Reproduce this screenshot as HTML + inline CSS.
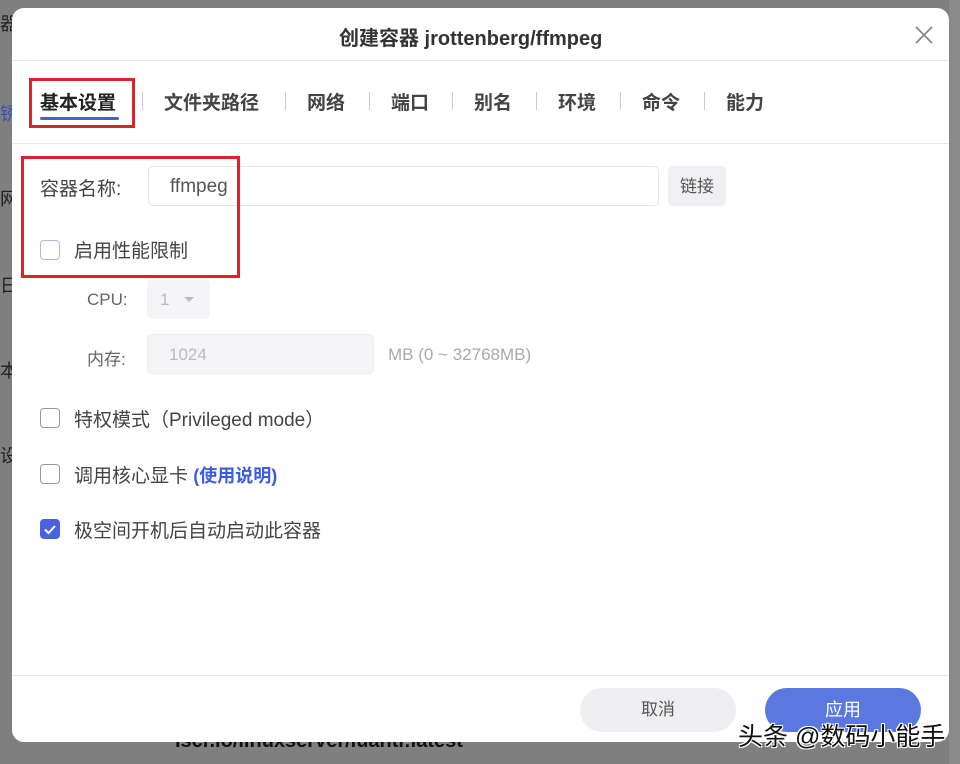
<!DOCTYPE html>
<html><head><meta charset="utf-8"><style>
*{margin:0;padding:0;box-sizing:border-box}
body{width:960px;height:764px;background:#7f7f7f;position:relative;overflow:hidden;font-family:"Liberation Sans","Noto Sans CJK SC",sans-serif;color:#333}
.a{position:absolute}
.dlg{left:12px;top:8px;width:937px;height:734px;background:#fff;border-radius:12px}
.t{font-size:20px;font-weight:bold;color:#333;white-space:nowrap}
.tab{top:88px;font-size:19px;font-weight:bold;color:#444;white-space:nowrap}
.sep{top:92px;width:1px;height:18px;background:#ccc}
.cb{width:20px;height:20px;border:1.5px solid #999;border-radius:4px;background:#fff}
.lbl{font-size:19px;color:#444;white-space:nowrap}
.red{border:3px solid #d9232d}
</style></head><body>
<div class="a" style="left:0;top:10px;font-size:18px;color:#222;">器</div>
<div class="a" style="left:0;top:100px;font-size:18px;color:#3350c0;">锈</div>
<div class="a" style="left:0;top:185px;font-size:18px;color:#222;">网</div>
<div class="a" style="left:0;top:272px;font-size:18px;color:#222;">日</div>
<div class="a" style="left:0;top:357px;font-size:18px;color:#222;">本</div>
<div class="a" style="left:0;top:442px;font-size:18px;color:#222;">设</div>
<div class="a" style="left:949px;top:0;width:11px;height:764px;background:#8a8a8a"></div>
<div class="a" style="left:175px;top:730px;font-size:20px;color:#111;font-weight:bold">lscr.io/linuxserver/luanti:latest</div>
<div class="a dlg"></div>
<div class="a t" style="left:339px;top:22px">创建容器 jrottenberg/ffmpeg</div>
<div class="a" style="left:913px;top:24px"><svg width="22" height="22"><path d="M3 3L19 19M19 3L3 19" stroke="#888" stroke-width="1.8"/></svg></div>
<div class="a" style="left:12px;top:60px;width:937px;height:1px;background:#e8e8e8"></div>
<div class="a" style="left:12px;top:143px;width:937px;height:1px;background:#e8e8e8"></div>
<div class="a" style="left:12px;top:675px;width:937px;height:1px;background:#e8e8e8"></div>
<div class="a tab" style="left:40px;color:#222">基本设置</div>
<div class="a" style="left:40px;top:117px;width:79px;height:3px;background:#4a5fd6;border-radius:2px"></div>
<div class="a red" style="left:29px;top:78px;width:106px;height:50px"></div>
<div class="a sep" style="left:142px"></div>
<div class="a tab" style="left:164px">文件夹路径</div>
<div class="a sep" style="left:285px"></div>
<div class="a tab" style="left:307px">网络</div>
<div class="a sep" style="left:369px"></div>
<div class="a tab" style="left:391px">端口</div>
<div class="a sep" style="left:452px"></div>
<div class="a tab" style="left:474px">别名</div>
<div class="a sep" style="left:536px"></div>
<div class="a tab" style="left:558px">环境</div>
<div class="a sep" style="left:620px"></div>
<div class="a tab" style="left:642px">命令</div>
<div class="a sep" style="left:704px"></div>
<div class="a tab" style="left:726px">能力</div>

<div class="a lbl" style="left:40px;top:174px">容器名称:</div>
<div class="a" style="left:148px;top:166px;width:511px;height:40px;border:1px solid #e6e6e6;border-radius:5px"></div>
<div class="a lbl" style="left:170px;top:176px;color:#555">ffmpeg</div>
<div class="a" style="left:668px;top:166px;width:58px;height:40px;background:#f0f0f3;border-radius:5px;font-size:17px;color:#555;text-align:center;line-height:42px">链接</div>
<div class="a red" style="left:21px;top:156px;width:219px;height:122px"></div>
<div class="a cb" style="left:40px;top:240px;border-color:#a8b8e0"></div>
<div class="a lbl" style="left:74px;top:236px">启用性能限制</div>

<div class="a" style="left:87px;top:290px;font-size:17px;color:#666">CPU:</div>
<div class="a" style="left:147px;top:279px;width:63px;height:40px;background:#f5f5f7;border-radius:5px"></div>
<div class="a" style="left:160px;top:290px;font-size:17px;color:#bbb">1</div>
<div class="a" style="left:184px;top:297px;width:0;height:0;border-left:5px solid transparent;border-right:5px solid transparent;border-top:5px solid #bbb"></div>
<div class="a" style="left:87px;top:345px;font-size:17px;color:#666">内存:</div>
<div class="a" style="left:147px;top:334px;width:227px;height:40px;background:#f5f5f7;border:1px solid #eee;border-radius:5px"></div>
<div class="a" style="left:169px;top:345px;font-size:17px;color:#bbb">1024</div>
<div class="a" style="left:388px;top:345px;font-size:17px;color:#aaa">MB (0 ~ 32768MB)</div>

<div class="a cb" style="left:40px;top:408px"></div>
<div class="a lbl" style="left:74px;top:405px">特权模式（Privileged mode）</div>
<div class="a cb" style="left:40px;top:464px"></div>
<div class="a lbl" style="left:74px;top:461px">调用核心显卡 <b style="color:#3d5be0;font-size:18px">(使用说明)</b></div>
<div class="a" style="left:40px;top:519px;width:20px;height:20px;background:#4a62e0;border-radius:4px"><svg width="20" height="20"><path d="M5 10.5l3.5 3.5 6.5-7" stroke="#fff" stroke-width="2" fill="none"/></svg></div>
<div class="a lbl" style="left:74px;top:516px">极空间开机后自动启动此容器</div>

<div class="a" style="left:580px;top:688px;width:156px;height:44px;border-radius:22px;background:#efeff2;text-align:center;line-height:44px;font-size:17px;color:#555">取消</div>
<div class="a" style="left:765px;top:688px;width:156px;height:44px;border-radius:22px;background:#5b78e0;text-align:center;line-height:44px;font-size:18px;color:#fff">应用</div>
<div class="a" style="left:738px;top:717px;font-size:25px;color:#111;text-shadow:1px 1px 0 #fff,-1px -1px 0 #fff,1px -1px 0 #fff,-1px 1px 0 #fff;white-space:nowrap">头条 @数码小能手</div>
</body></html>
